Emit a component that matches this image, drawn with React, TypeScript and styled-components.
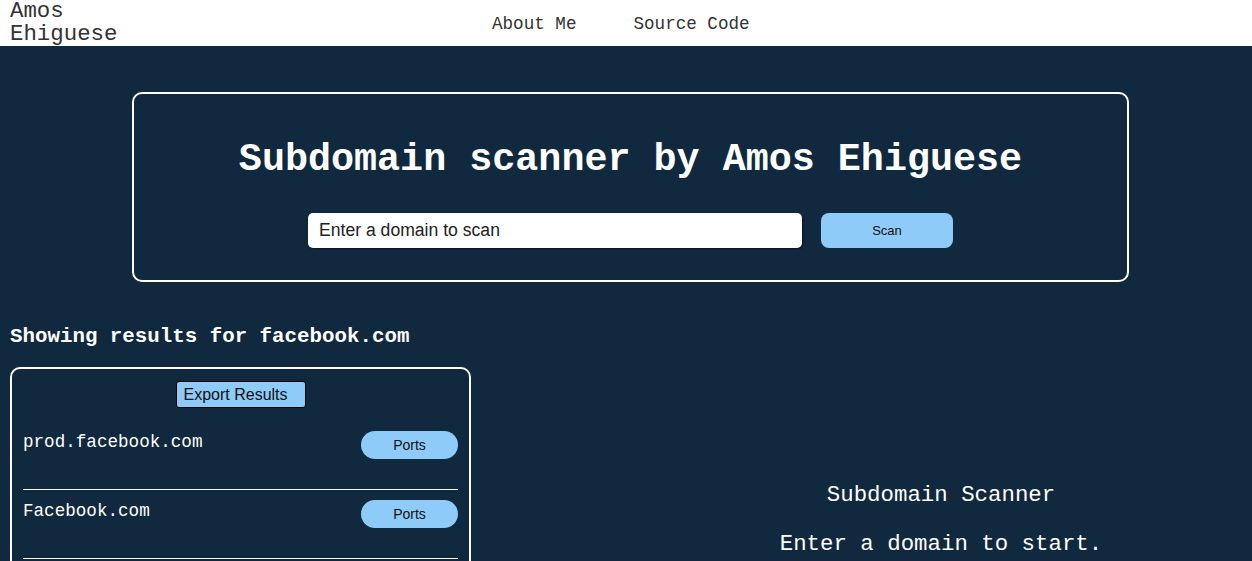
import React from "react";
import styled, { createGlobalStyle } from "styled-components";

const GlobalStyle = createGlobalStyle`
  html, body { margin: 0; padding: 0; }
  body {
    background: #11293f;
    font-family: "Liberation Mono", "Courier New", monospace;
    overflow: hidden;
  }
  * { box-sizing: border-box; }
`;

const Header = styled.header`
  display: flex;
  align-items: center;
  height: 46px;
  background: #ffffff;
`;

const Logo = styled.div`
  width: 130px;
  padding-left: 10px;
  font-size: 22.4px;
  line-height: 22.6px;
  color: #333333;
`;

const Nav = styled.nav`
  display: flex;
  gap: 57px;
  margin: 2px 0 0 362px;
`;

const NavLink = styled.a`
  font-size: 17.6px;
  color: #333333;
  text-decoration: none;
`;

const Hero = styled.section`
  width: 997px;
  margin: 46px 0 0 132px;
  border: 2px solid #ffffff;
  border-radius: 10px;
  padding: 44px 0 32px;
  display: flex;
  flex-direction: column;
  align-items: center;
  gap: 31px;
`;

const Title = styled.h1`
  margin: 0;
  font-size: 38.4px;
  font-weight: bold;
  color: #ffffff;
  line-height: normal;
`;

const SearchRow = styled.div`
  display: flex;
  gap: 19px;
`;

const DomainInput = styled.input`
  width: 494px;
  height: 35px;
  border: none;
  border-radius: 5px;
  padding: 0 11px;
  font-family: "Liberation Sans", Arial, sans-serif;
  font-size: 17.6px;
  color: #222;
  background: #fff;
  box-shadow: 1px 1px 2px rgba(0, 0, 0, 0.5);
  outline: none;
  &::placeholder { color: #222; opacity: 1; }
`;

const ScanButton = styled.button`
  width: 132px;
  height: 35px;
  border: none;
  border-radius: 8px;
  background: #8ecbf8;
  font-family: "Liberation Sans", Arial, sans-serif;
  font-size: 13px;
  color: #111;
`;

const Main = styled.main`
  display: grid;
  grid-template-columns: 630px 1fr;
  margin-top: 43px;
`;

const LeftCol = styled.div`
  padding-left: 10px;
  display: flex;
  flex-direction: column;
  gap: 19px;
`;

const ResultsHeading = styled.h2`
  margin: 0;
  font-size: 20.8px;
  font-weight: bold;
  color: #ffffff;
  line-height: normal;
`;

const ResultsBox = styled.div`
  width: 461px;
  border: 2px solid #ffffff;
  border-radius: 10px;
  padding: 12px 11px 40px;
  display: flex;
  flex-direction: column;
`;

const ExportButton = styled.button`
  align-self: center;
  width: 130px;
  height: 27px;
  margin-bottom: 13px;
  padding: 0 0 0 7px;
  text-align: left;
  border: 1px solid #000;
  border-radius: 3px;
  background: #8ecbf8;
  font-family: "Liberation Sans", Arial, sans-serif;
  font-size: 16px;
  color: #111;
`;

const ResultItem = styled.div`
  display: flex;
  justify-content: space-between;
  align-items: flex-start;
  padding: 10px 0 30px;
  border-bottom: 1px solid #ffffff;
`;

const Domain = styled.span`
  margin-top: 1px;
  font-size: 17.6px;
  line-height: normal;
  color: #ffffff;
`;

const PortsButton = styled.button`
  width: 97px;
  height: 28px;
  border: none;
  border-radius: 14px;
  background: #8ecbf8;
  font-family: "Liberation Sans", Arial, sans-serif;
  font-size: 14px;
  color: #111;
`;

const RightCol = styled.div`
  padding-top: 158px;
  display: flex;
  flex-direction: column;
  align-items: center;
  gap: 24px;
`;

const IntroText = styled.p`
  margin: 0;
  font-size: 22.4px;
  line-height: 25px;
  color: #ffffff;
`;

const results = ["prod.facebook.com", "Facebook.com"];

export default function App() {
  return (
    <>
      <GlobalStyle />
      <Header>
        <Logo>Amos Ehiguese</Logo>
        <Nav>
          <NavLink href="#">About Me</NavLink>
          <NavLink href="#">Source Code</NavLink>
        </Nav>
      </Header>
      <Hero>
        <Title>Subdomain scanner by Amos Ehiguese</Title>
        <SearchRow>
          <DomainInput placeholder="Enter a domain to scan" />
          <ScanButton>Scan</ScanButton>
        </SearchRow>
      </Hero>
      <Main>
        <LeftCol>
          <ResultsHeading>Showing results for facebook.com</ResultsHeading>
          <ResultsBox>
            <ExportButton>Export Results</ExportButton>
            {results.map((r) => (
              <ResultItem key={r}>
                <Domain>{r}</Domain>
                <PortsButton>Ports</PortsButton>
              </ResultItem>
            ))}
          </ResultsBox>
        </LeftCol>
        <RightCol>
          <IntroText>Subdomain Scanner</IntroText>
          <IntroText>Enter a domain to start.</IntroText>
        </RightCol>
      </Main>
    </>
  );
}
